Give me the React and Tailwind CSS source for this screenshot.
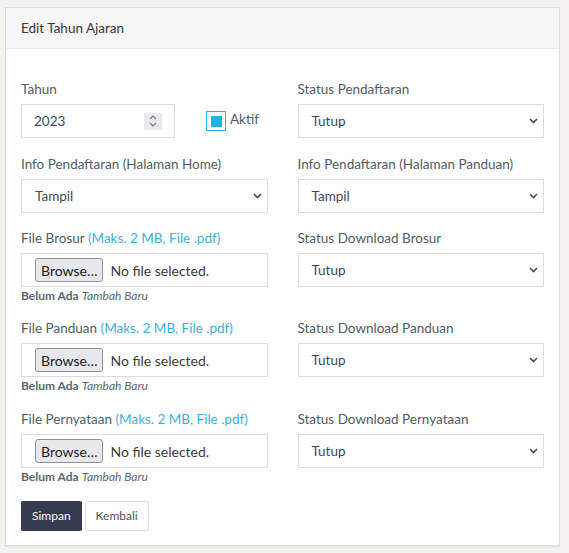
import React from "react";

const hint = "text-[#39b2e2]";

function Label({ children, note }) {
  return (
    <label className="block h-5 leading-5 mb-[5px] text-[13.5px] text-[#4f5d67]">
      {children}
      {note && <span className={hint}> {note}</span>}
    </label>
  );
}

function Chevron() {
  return (
    <svg width="9" height="6" viewBox="0 0 9 6" className="shrink-0">
      <path d="M1 1l3.5 3.5L8 1" fill="none" stroke="#4a4a4a" strokeWidth="1.6" />
    </svg>
  );
}

function Select({ value }) {
  return (
    <div className="h-[34px] flex items-center justify-between pl-[13px] pr-[5px] border border-[#d7dde0] bg-white text-[13.5px] text-[#3c4a54]">
      <span>{value}</span>
      <Chevron />
    </div>
  );
}

function FileInput() {
  return (
    <div>
      <div className="h-[34px] flex items-center pl-[13px] border border-[#d7dde0] bg-white text-[14px] text-[#333]">
        <span className="h-6 flex items-center px-[5px] rounded-[3px] border border-[#8f8f9d] bg-[#e9e9ed] text-[#1b1b1b]">
          Browse…
        </span>
        <span className="ml-[7px] text-[#3b3b3b]">No file selected.</span>
      </div>
      <div className="mt-[1px] h-4 leading-4 text-[12px] text-[#5b6770]">
        <b className="font-bold">Belum Ada</b> <i>Tambah Baru</i>
      </div>
    </div>
  );
}

export default function App() {
  return (
    <div
      className="min-h-[553px] bg-[#f3f2ef] pt-[7px] pl-[5px] pr-[9px]"
      style={{ fontFamily: "Lato, 'Liberation Sans', sans-serif" }}
    >
      <div className="bg-white border border-[#d9dfe1] shadow-[0_1px_1px_rgba(0,0,0,0.05)]">
        <div className="h-[41px] flex items-center px-[15px] bg-[#f7f7f7] border-b border-[#e8ebeb] text-[13.5px] text-[#363636]">
          Edit Tahun Ajaran
        </div>
        <div className="px-[15px] pt-[30px] pb-[14px]">
          <div className="grid grid-cols-2 gap-x-[30px]">
            <div className="mb-4">
              <Label>Tahun</Label>
              <div className="flex items-center">
                <div className="w-[154px] h-[34px] flex items-center justify-between pl-3 pr-[12px] border border-[#d7dde0] text-[13.5px] text-[#3c4a54]">
                  <span>2023</span>
                  <span className="w-[18px] h-[17px] flex flex-col items-center justify-center gap-[2px] bg-[#e9e9ed]">
                    <svg width="8" height="5" viewBox="0 0 8 5">
                      <path d="M1 4l3-3 3 3" fill="none" stroke="#777" strokeWidth="1.1" />
                    </svg>
                    <svg width="8" height="5" viewBox="0 0 8 5">
                      <path d="M1 1l3 3 3-3" fill="none" stroke="#777" strokeWidth="1.1" />
                    </svg>
                  </span>
                </div>
                <div className="ml-[31px] flex items-center gap-[4px]">
                  <span className="w-5 h-5 flex items-center justify-center border border-[#21b2e4]">
                    <span className="w-[11px] h-[11px] bg-[#21b2e4]" />
                  </span>
                  <span className="text-[13.5px] text-[#4f5d67] -mt-1">Aktif</span>
                </div>
              </div>
            </div>
            <div className="mb-4">
              <Label>Status Pendaftaran</Label>
              <Select value="Tutup" />
            </div>

            <div className="mb-[15px]">
              <Label>Info Pendaftaran (Halaman Home)</Label>
              <Select value="Tampil" />
            </div>
            <div className="mb-[15px]">
              <Label>Info Pendaftaran (Halaman Panduan)</Label>
              <Select value="Tampil" />
            </div>

            <div className="mb-[14px]">
              <Label note="(Maks. 2 MB, File .pdf)">File Brosur</Label>
              <FileInput />
            </div>
            <div className="mb-[14px]">
              <Label>Status Download Brosur</Label>
              <Select value="Tutup" />
            </div>

            <div className="mb-[15px]">
              <Label note="(Maks. 2 MB, File .pdf)">File Panduan</Label>
              <FileInput />
            </div>
            <div className="mb-[15px]">
              <Label>Status Download Panduan</Label>
              <Select value="Tutup" />
            </div>

            <div className="mb-4">
              <Label note="(Maks. 2 MB, File .pdf)">File Pernyataan</Label>
              <FileInput />
            </div>
            <div className="mb-4">
              <Label>Status Download Pernyataan</Label>
              <Select value="Tutup" />
            </div>
          </div>

          <div className="flex gap-[3px]">
            <button className="h-[30px] px-[11px] rounded-[2px] bg-[#363a4f] text-white text-[12px]">
              Simpan
            </button>
            <button className="h-[30px] px-[10px] rounded-[2px] border border-[#d7dde0] bg-white text-[#555] text-[12px]">
              Kembali
            </button>
          </div>
        </div>
      </div>
    </div>
  );
}
